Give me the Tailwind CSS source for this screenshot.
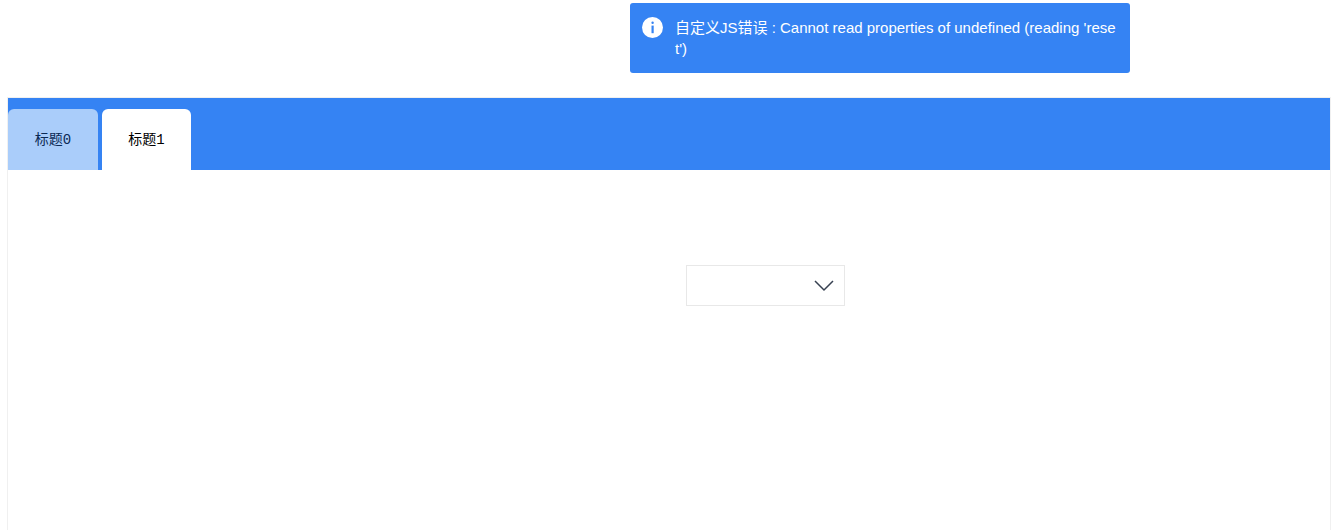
<!DOCTYPE html>
<html lang="en">
<head>
    <meta charset="UTF-8">
    <meta name="viewport" content="width=device-width, initial-scale=1.0">
    <title>Tabs</title>
    <script src="https://cdn.jsdelivr.net/npm/@tailwindcss/browser@4"></script>
</head>
<body class="bg-white h-[530px] overflow-hidden font-['Liberation_Sans','Noto_Sans_CJK_SC',sans-serif]">
    <!-- toast -->
    <div class="absolute left-[630px] top-[3px] w-[500px] h-[70px] bg-[#3583f3] rounded-[3px] flex items-start pl-[12px] pr-[14px] pt-[14px] text-white">
        <svg class="w-[21px] h-[21px] shrink-0" viewBox="0 0 21 21">
            <circle cx="10.5" cy="10.5" r="10.5" fill="#fff"/>
            <rect x="9.4" y="4.6" width="2.4" height="2.4" rx="1.2" fill="#3583f3"/>
            <rect x="9.5" y="8.6" width="2.2" height="7.6" fill="#3583f3"/>
        </svg>
        <p class="ml-[12px] text-[15px] leading-[21px] break-all">自定义JS错误 : Cannot read properties of undefined (reading 'reset')</p>
    </div>

    <div class="pt-[97px] pl-[7px] pr-[10px]">
        <div class="h-[433px] border-x border-t border-[#f0f0f0]">
            <div class="h-[72px] bg-[#3583f3] flex items-end gap-[4px]">
                <div class="w-[90px] h-[61px] pt-[2px] bg-[#aacdfa] rounded-t-[6px] flex items-center justify-center text-[14px] text-[#0b2a55] font-['Liberation_Mono','Noto_Sans_CJK_SC',monospace]">标题0</div>
                <div class="w-[89px] h-[61px] pt-[2px] bg-white rounded-t-[6px] flex items-center justify-center text-[14px] text-black font-['Liberation_Mono','Noto_Sans_CJK_SC',monospace]">标题1</div>
            </div>
            <div class="pt-[95px] pl-[678px]">
                <div class="w-[159px] h-[41px] border border-[#e8e8e8] flex items-center justify-end pr-[10px]">
                    <svg class="w-[20px] h-[12px]" viewBox="0 0 20 12" fill="none" stroke="#374151" stroke-width="1.5">
                        <path d="M1 1 L10 10 L19 1"/>
                    </svg>
                </div>
            </div>
        </div>
    </div>
</body>
</html>
